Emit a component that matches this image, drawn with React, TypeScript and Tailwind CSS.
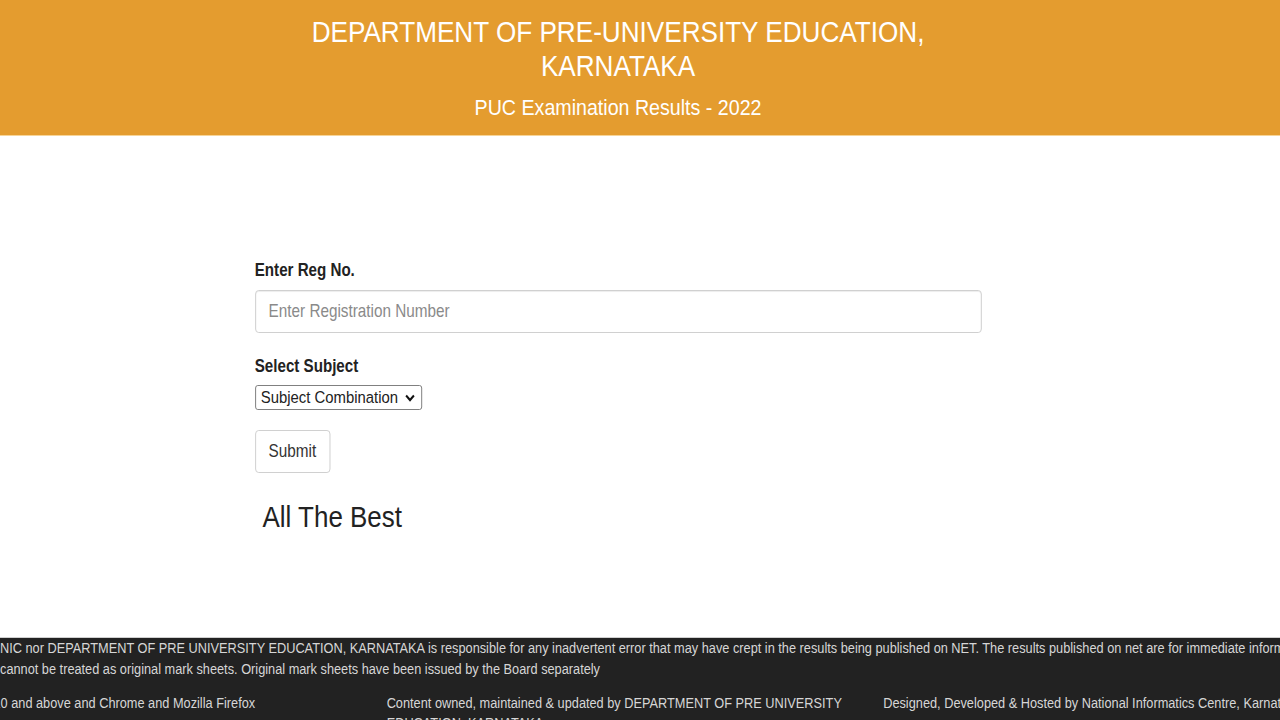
import React from 'react';

export default function App() {
  return (
    <div className="w-full overflow-hidden bg-white font-['Liberation_Sans',Arial,sans-serif]">
      <div className="w-[1480px] origin-top-left scale-x-[0.865]">
        <header className="bg-[#e49c2f] border-b border-[#f7d497] text-white">
          <div className="w-[1429px] text-center pt-[15px] pb-[14px]">
            <h1 className="text-[30.2px] leading-[34px] font-normal">
              DEPARTMENT OF PRE-UNIVERSITY EDUCATION,
              <br />
              KARNATAKA
            </h1>
            <h2 className="mt-[11px] text-[22.7px] leading-[27px] font-normal">
              PUC Examination Results - 2022
            </h2>
          </div>
        </header>

        <main className="w-[1429px] h-[501px] pt-[122px]">
          <form className="mx-auto w-[840px]" onSubmit={(e) => e.preventDefault()}>
            <label htmlFor="regno" className="block text-[17.5px] leading-[25px] font-bold text-[#222]">
              Enter Reg No.
            </label>
            <input
              id="regno"
              type="text"
              placeholder="Enter Registration Number"
              className="mt-[7px] block w-full h-[43px] px-[15px] border border-[#cccccc] rounded-[4px] bg-white text-[17.7px] text-[#333] placeholder:text-[#8a8a8a] shadow-[inset_0_1px_1px_rgba(0,0,0,0.075)] outline-none"
            />

            <label htmlFor="subject" className="mt-[21px] block text-[17.5px] leading-[25px] font-bold text-[#222]">
              Select Subject
            </label>
            <div className="relative mt-[6px] w-[193px] h-[25px]">
              <select
                id="subject"
                className="appearance-none block w-full h-full pl-[6px] pr-[14px] border border-[#767676] rounded-[3px] bg-white text-[17.2px] leading-[23px] text-[#222] outline-none"
                defaultValue=""
              >
                <option value="">Subject Combination</option>
                <option value="pcmb">PCMB</option>
                <option value="pcmc">PCMC</option>
              </select>
              <svg
                className="pointer-events-none absolute right-[8px] top-[9px] w-[12px] h-[8px]"
                viewBox="0 0 12 8"
                fill="none"
                stroke="#111"
                strokeWidth="2.4"
              >
                <path d="M1.5 1.5 L6 6 L10.5 1.5" />
              </svg>
            </div>

            <button
              type="submit"
              className="mt-[20px] block h-[43px] px-[15px] border border-[#cccccc] rounded-[4px] bg-white text-[17.7px] text-[#333]"
            >
              Submit
            </button>

            <p className="mt-[26px] ml-[9px] text-[30px] leading-[36px] text-[#222]">All The Best</p>
          </form>
        </main>

        <footer className="border-t border-[#d0d0d0] bg-[#222222] text-[#d6d6d6] text-[14.75px]">
          <div className="leading-[21px] whitespace-nowrap">
            <p>
              NIC nor DEPARTMENT OF PRE UNIVERSITY EDUCATION, KARNATAKA is responsible for any inadvertent error that may have crept in the results being published on NET. The results published on net are for immediate information to the examinees. These
            </p>
            <p>cannot be treated as original mark sheets. Original mark sheets have been issued by the Board separately</p>
          </div>
          <div className="mt-[13px] ml-[-142px] w-[1722px] grid grid-cols-3 leading-[20px] pb-[10px]">
            <div className="px-[15px]">Best Viewed in IE 10 and above and Chrome and Mozilla Firefox</div>
            <div className="px-[15px]">
              Content owned, maintained &amp; updated by DEPARTMENT OF PRE UNIVERSITY EDUCATION, KARNATAKA
            </div>
            <div className="px-[15px]">Designed, Developed &amp; Hosted by National Informatics Centre, Karnataka</div>
          </div>
        </footer>
      </div>
    </div>
  );
}
